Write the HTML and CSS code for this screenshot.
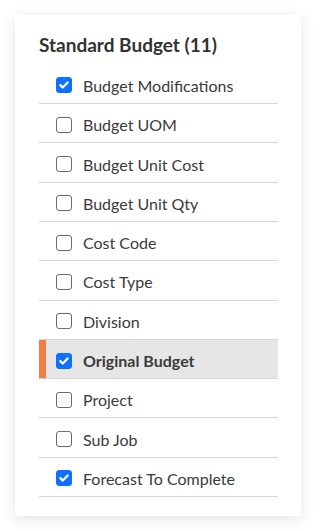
FILE: index.html
```html
<!DOCTYPE html>
<html>
<head>
<meta charset="utf-8">
<link rel="stylesheet" href="styles.css">
</head>
<body>
<div class="card">
  <div class="title">Standard Budget (11)</div>
  <ul class="list">
    <li class="row"><span class="box checked"><svg viewBox="0 0 16 16"><path d="M3.8 8.2l2.7 2.7L12.2 5.2"/></svg></span><span class="label">Budget Modifications</span></li>
    <li class="row"><span class="box"></span><span class="label">Budget UOM</span></li>
    <li class="row"><span class="box"></span><span class="label">Budget Unit Cost</span></li>
    <li class="row"><span class="box"></span><span class="label">Budget Unit Qty</span></li>
    <li class="row"><span class="box"></span><span class="label">Cost Code</span></li>
    <li class="row"><span class="box"></span><span class="label">Cost Type</span></li>
    <li class="row"><span class="box"></span><span class="label">Division</span></li>
    <li class="row active"><span class="box checked"><svg viewBox="0 0 16 16"><path d="M3.8 8.2l2.7 2.7L12.2 5.2"/></svg></span><span class="label">Original Budget</span></li>
    <li class="row"><span class="box"></span><span class="label">Project</span></li>
    <li class="row"><span class="box"></span><span class="label">Sub Job</span></li>
    <li class="row"><span class="box checked"><svg viewBox="0 0 16 16"><path d="M3.8 8.2l2.7 2.7L12.2 5.2"/></svg></span><span class="label">Forecast To Complete</span></li>
  </ul>
</div>
</body>
</html>
```
FILE: styles.css
```css
html, body {
  margin: 0;
  padding: 0;
  background: #ffffff;
}
body {
  font-family: Lato, "Liberation Sans", sans-serif;
  color: #3b3b3b;
}
.card {
  margin: 15px;
  width: 286px;
  height: 501px;
  box-sizing: border-box;
  background: #fff;
  box-shadow: 0 3px 14px rgba(0, 0, 0, 0.11);
  padding: 17.5px 23px 0 24px;
}
.title {
  font-size: 19px;
  font-weight: 700;
  line-height: 23px;
  color: #333;
}
.list {
  list-style: none;
  margin: 9.3px 0 0 0;
  padding: 0;
}
.row {
  position: relative;
  height: 39.3px;
  box-sizing: border-box;
  border-bottom: 1px solid #d6d6d6;
  display: flex;
  align-items: center;
  padding: 3px 0 0 17px;
  font-size: 16px;
}
.row.active {
  background: #e6e6e6;
  font-weight: 700;
}
.row.active::before {
  content: "";
  position: absolute;
  left: 0;
  top: 0;
  bottom: 0;
  width: 7px;
  background: #f47d3f;
}
.box {
  width: 16px;
  height: 16px;
  box-sizing: border-box;
  border: 1px solid #6b6b6b;
  border-radius: 3px;
  background: #fff;
  flex: none;
  margin-right: 11px;
  display: flex;
  align-items: center;
  justify-content: center;
}
.box.checked {
  background: #0f6fff;
  border-color: #0f6fff;
}
.box svg {
  width: 14px;
  height: 14px;
  fill: none;
  stroke: #fff;
  stroke-width: 2.6;
  stroke-linecap: round;
  stroke-linejoin: round;
}
```
